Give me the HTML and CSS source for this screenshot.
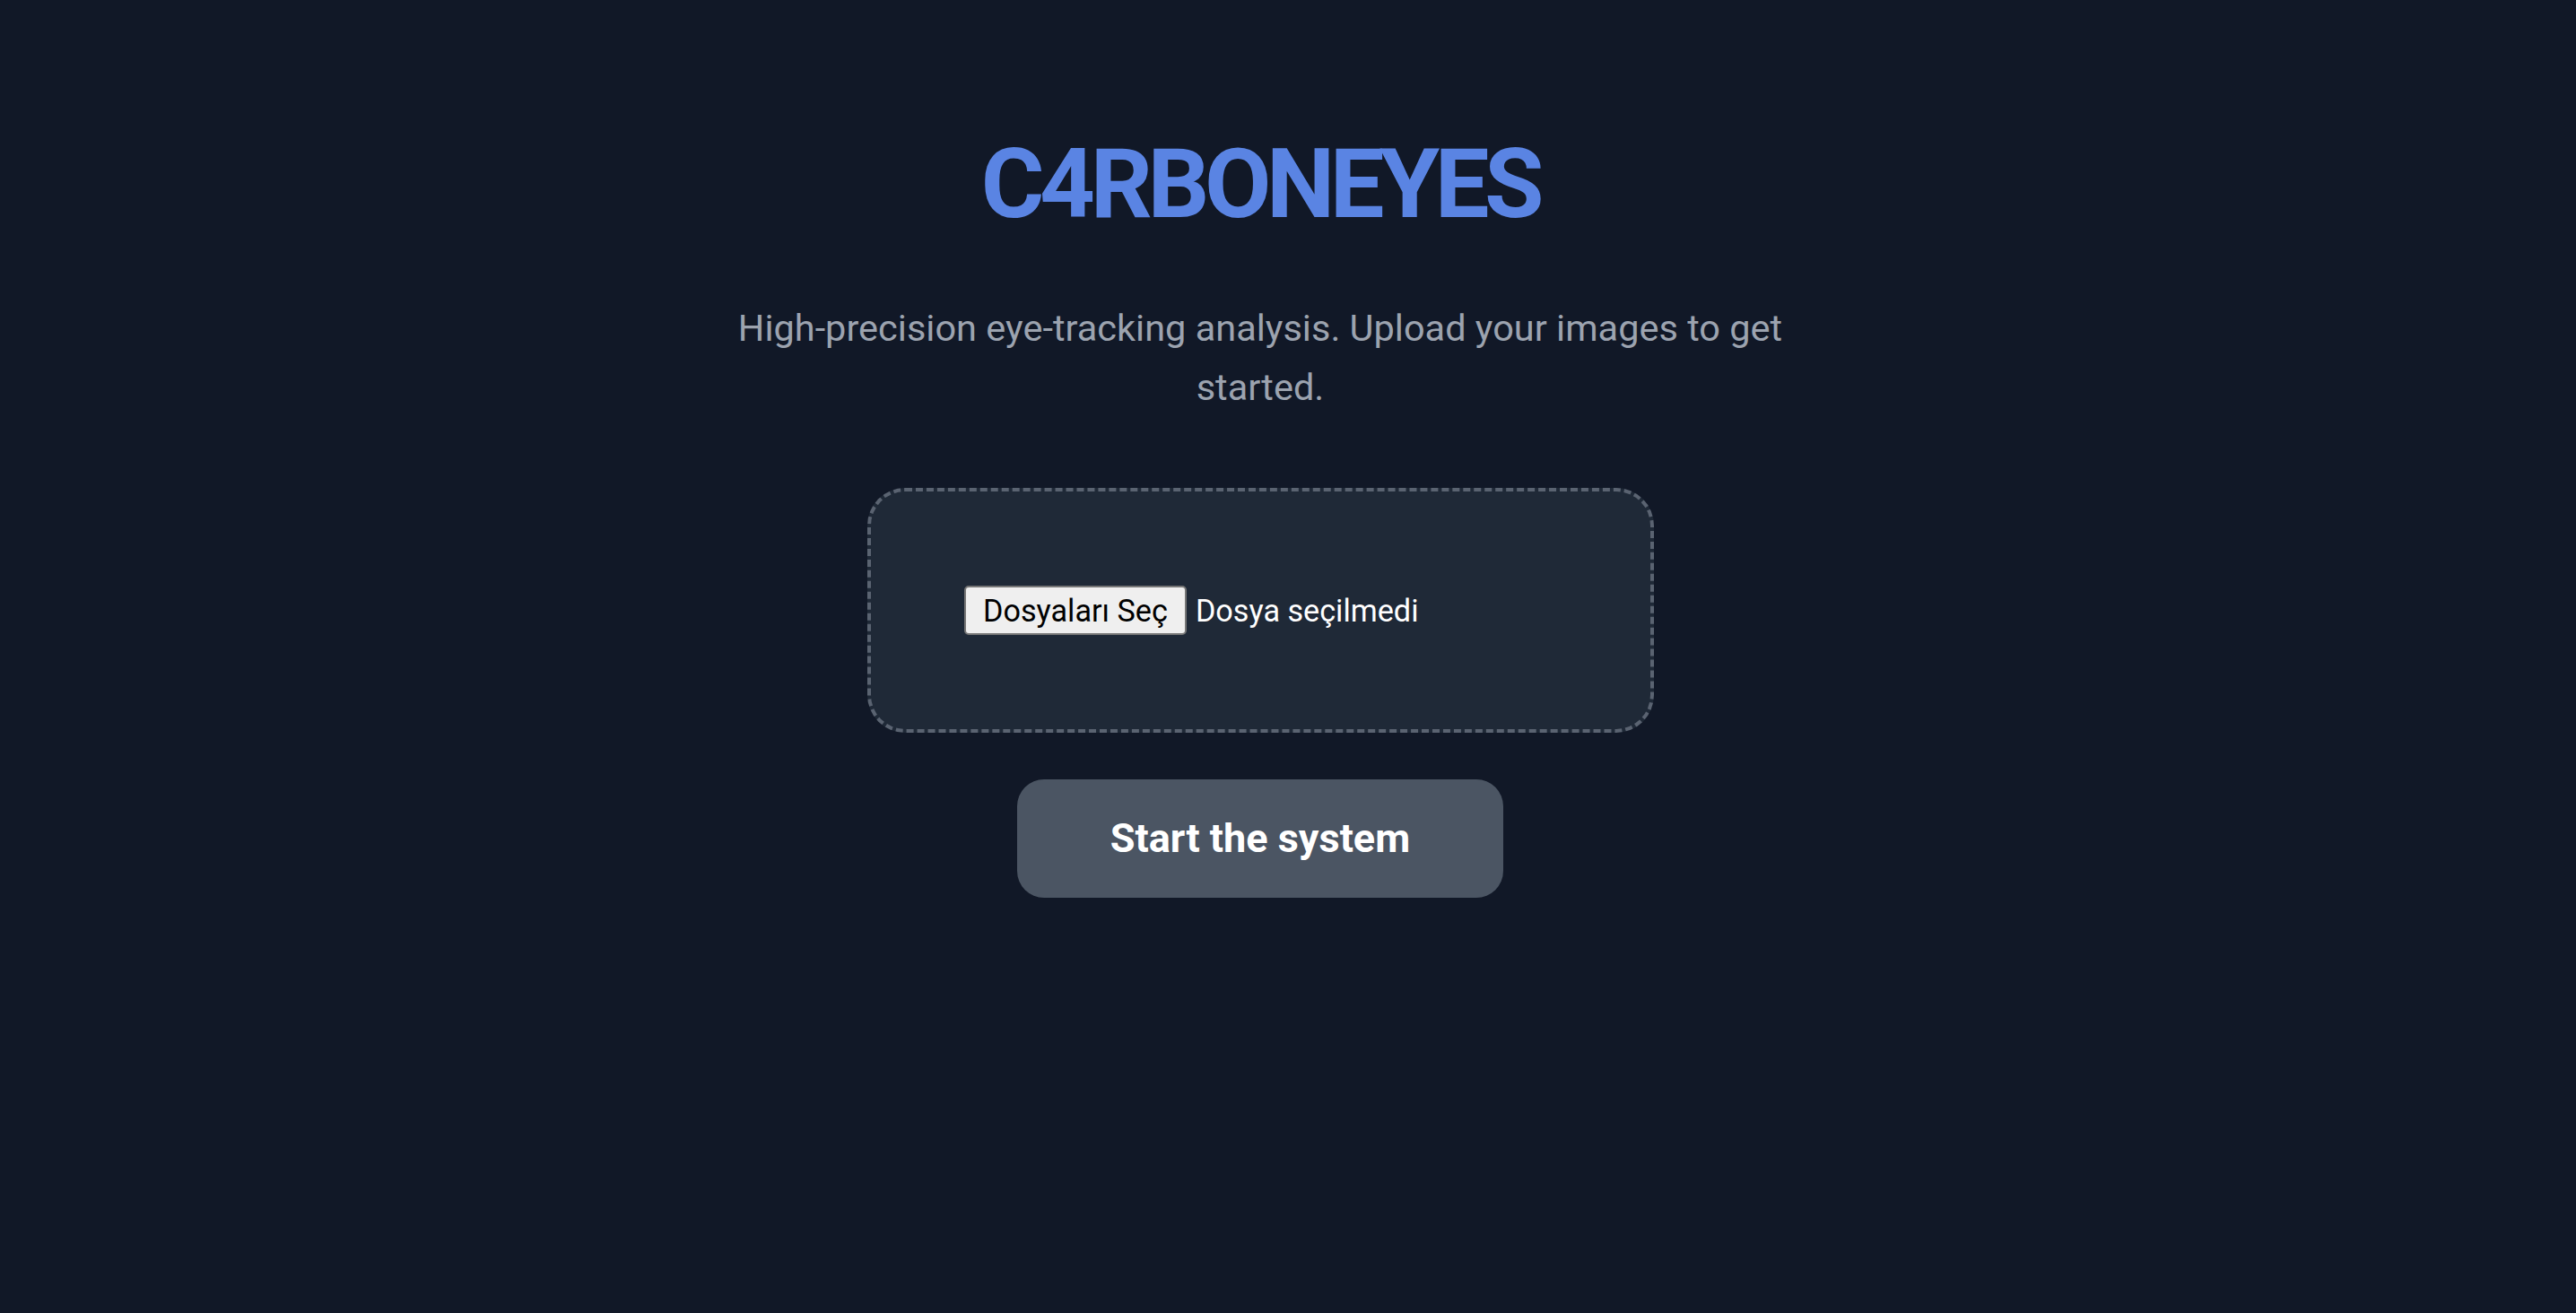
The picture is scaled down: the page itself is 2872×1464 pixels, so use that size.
FILE: index.html
```html
<!DOCTYPE html>
<html lang="tr">
<head>
<meta charset="utf-8">
<title>C4RBONEYES</title>
<link rel="stylesheet" href="styles.css">
</head>
<body>
<main class="page">
  <h1 class="title">C4RBONEYES</h1>
  <p class="subtitle">High-precision eye-tracking analysis. Upload your images to get started.</p>
  <div class="dropzone">
    <label class="file-field">
      <input class="file-input" type="file" multiple>
      <span class="file-btn">Dosyaları Seç</span>
      <span class="file-text">Dosya seçilmedi</span>
    </label>
  </div>
  <button class="start-btn" type="button">Start the system</button>
</main>
</body>
</html>
```

FILE: styles.css
```css
html, body {
  margin: 0;
  padding: 0;
  height: 100%;
}

body {
  background: #111827;
  font-family: Roboto, "Liberation Sans", Arial, sans-serif;
  color: #ffffff;
}

.page {
  display: flex;
  flex-direction: column;
  align-items: center;
  padding-top: 151px;
  padding-right: 62px;
}

.title {
  margin: 0;
  font-size: 108px;
  line-height: 1;
  font-weight: 700;
  color: #5a84e3;
  letter-spacing: -5.4px;
}

.subtitle {
  margin: 74px 0 0;
  max-width: 1250px;
  text-align: center;
  font-size: 41.5px;
  line-height: 66px;
  color: #9ca3af;
}

.dropzone {
  margin-top: 79px;
  box-sizing: border-box;
  width: 877px;
  height: 273px;
  border: 4px dashed #5a6371;
  border-radius: 42px;
  background: #1f2937;
  display: flex;
  align-items: center;
  justify-content: center;
}

.file-field {
  width: 660px;
  display: flex;
  align-items: center;
  gap: 10px;
  font-size: 34.2px;
  cursor: pointer;
}

.file-input {
  display: none;
}

.file-btn {
  box-sizing: border-box;
  height: 55px;
  display: flex;
  align-items: center;
  padding: 0 19px;
  background: #efefef;
  color: #000000;
  border: 2px solid #767676;
  border-radius: 5px;
}

.file-text {
  color: #ffffff;
}

.start-btn {
  margin-top: 52px;
  box-sizing: border-box;
  height: 132px;
  padding: 0 104px;
  border: none;
  border-radius: 30px;
  background: #4b5563;
  color: #ffffff;
  font-family: Roboto, "Liberation Sans", Arial, sans-serif;
  font-size: 45px;
  font-weight: 700;
  line-height: 60px;
  cursor: pointer;
}
```
